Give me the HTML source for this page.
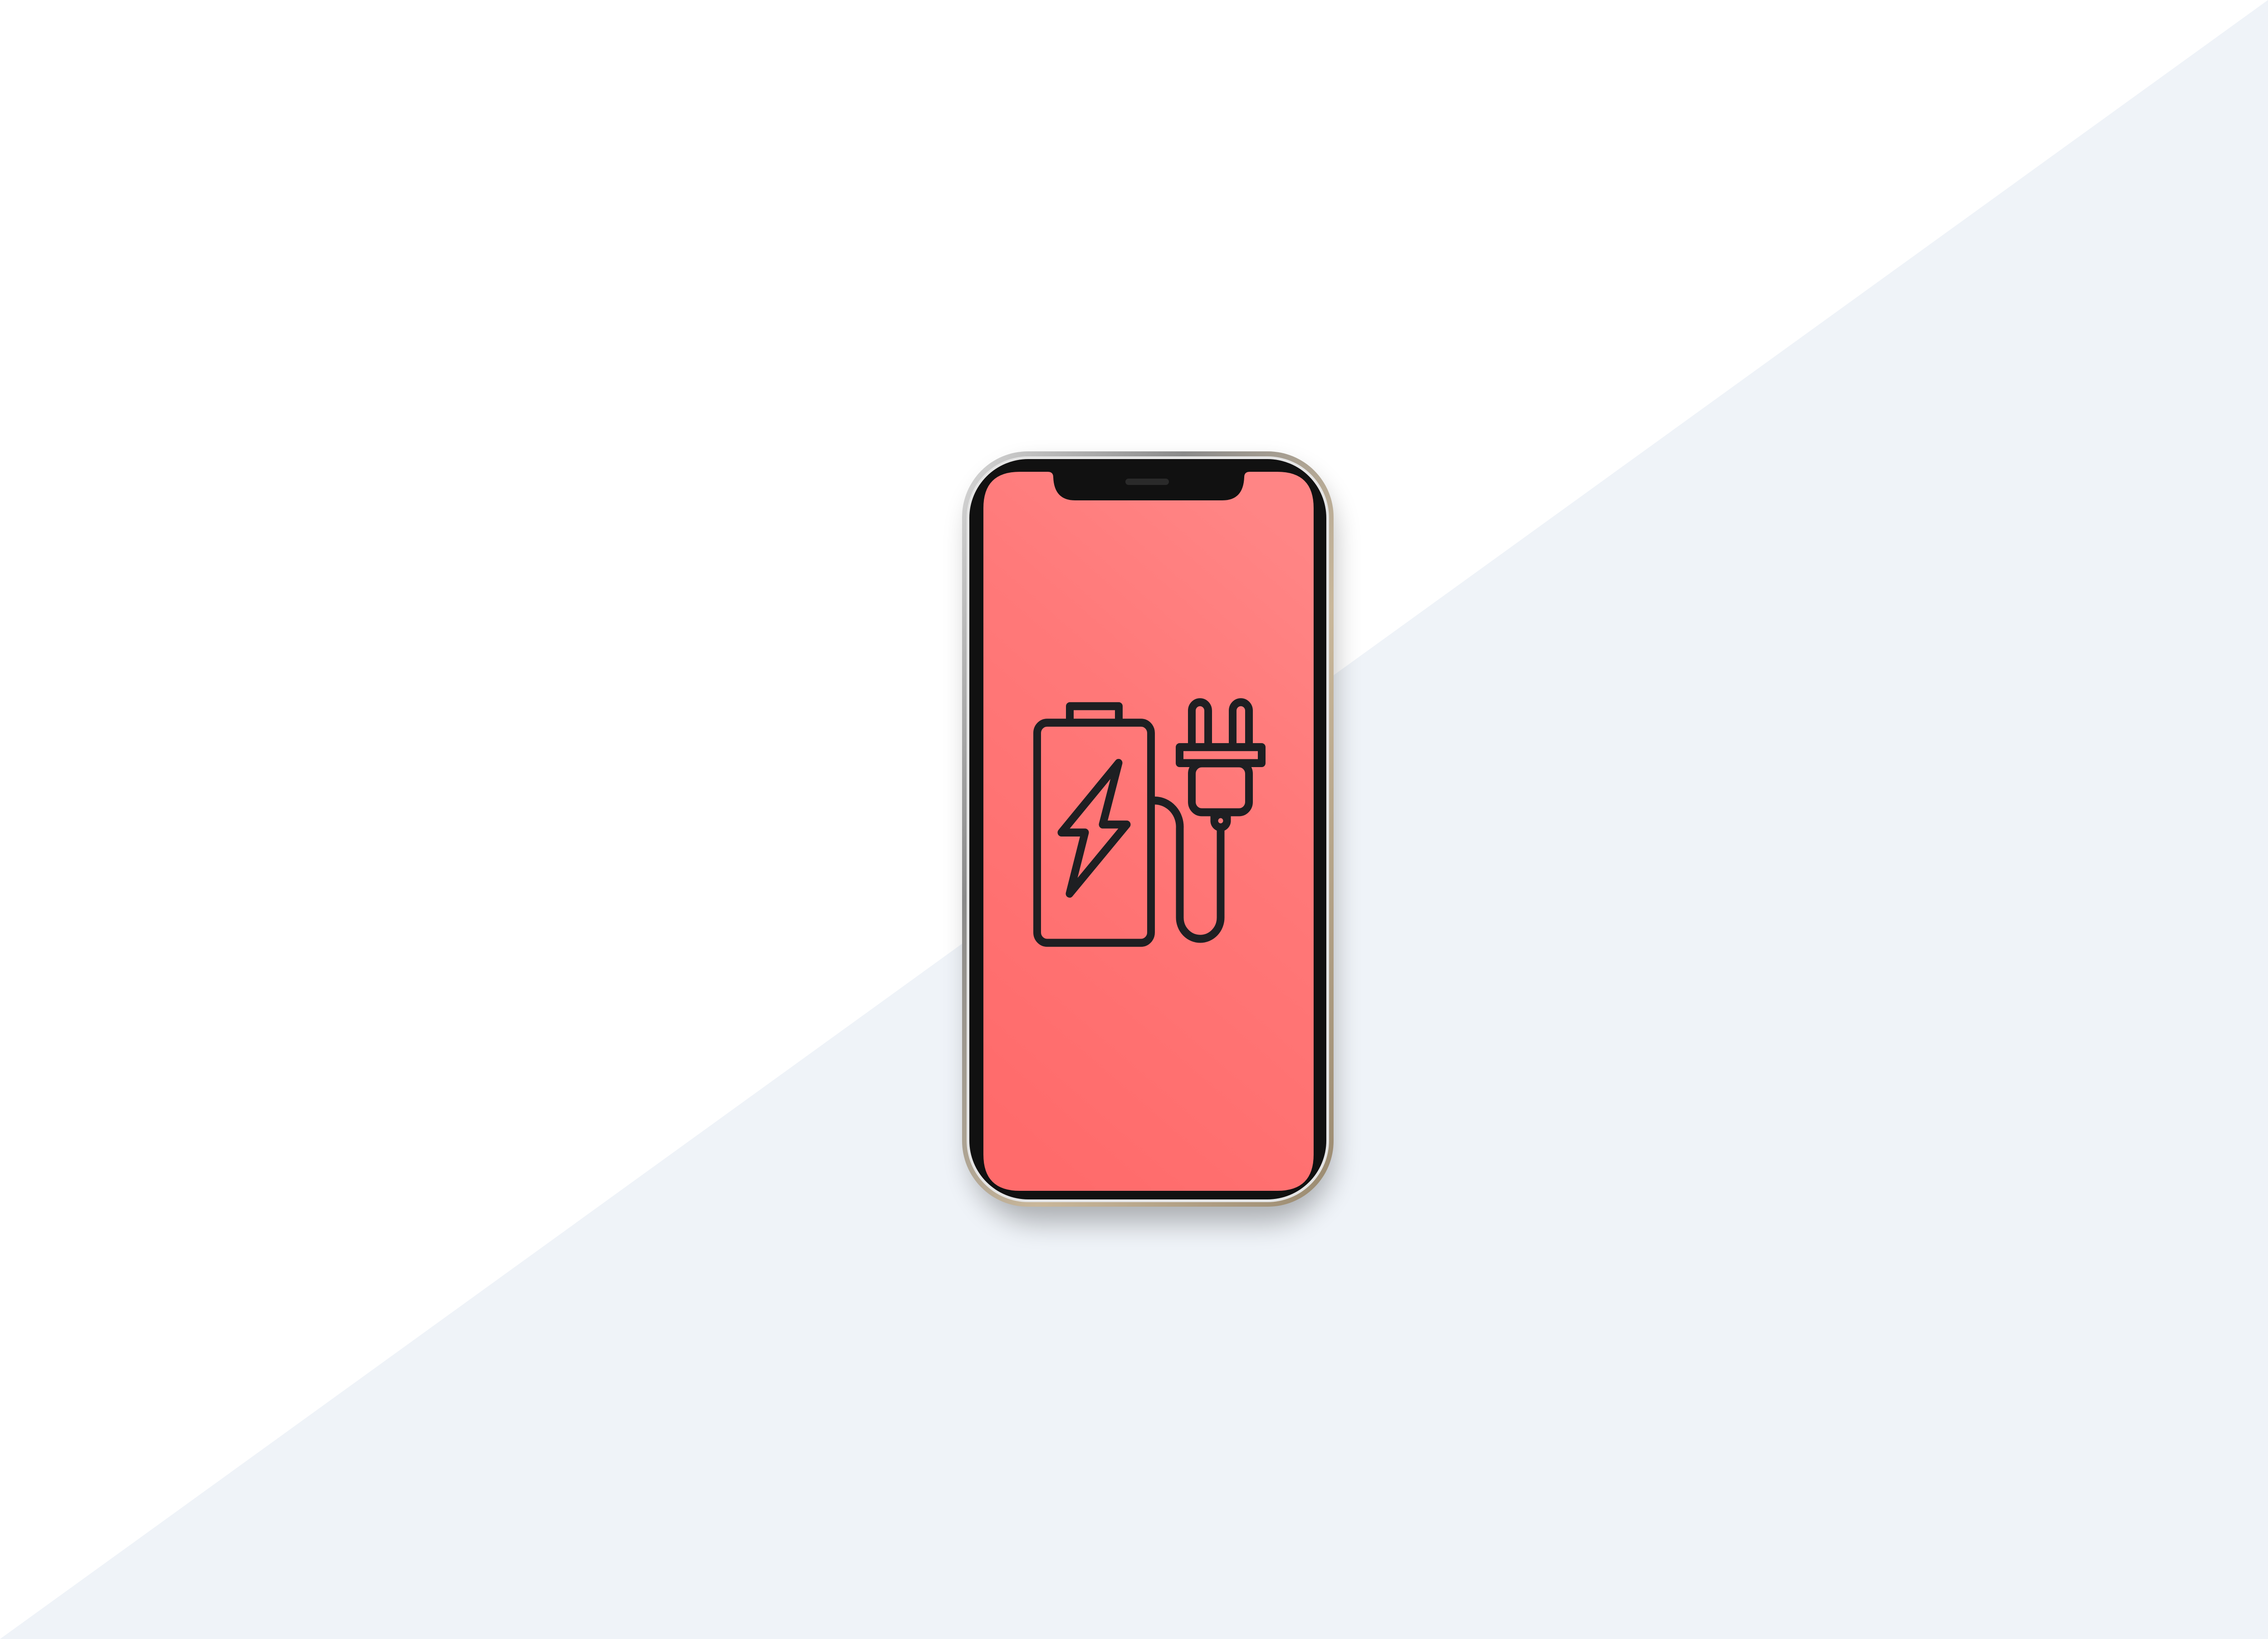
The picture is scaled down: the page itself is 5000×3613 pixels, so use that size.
<!DOCTYPE html>
<html><head><meta charset="utf-8"><style>
html,body{margin:0;padding:0;width:5000px;height:3613px;overflow:hidden;background:#fff}
svg{display:block}
</style></head><body>
<svg width="5000" height="3613" viewBox="0 0 5000 3613" xmlns="http://www.w3.org/2000/svg">
<defs>
<linearGradient id="scr" x1="0.7" y1="0" x2="0.3" y2="1">
<stop offset="0" stop-color="#ff8585"/><stop offset="0.35" stop-color="#ff7979"/><stop offset="1" stop-color="#ff6b6b"/>
</linearGradient>
<linearGradient id="rim" x1="0" y1="0" x2="1" y2="1">
<stop offset="0" stop-color="#d8d8d8"/><stop offset="0.3" stop-color="#8a8a8a"/><stop offset="0.6" stop-color="#c9b79a"/><stop offset="1" stop-color="#9a8a70"/>
</linearGradient>
<filter id="sh" x="-20%" y="-20%" width="140%" height="140%"><feGaussianBlur stdDeviation="30"/></filter>
</defs>
<polygon points="5000,0 5000,3613 0,3613" fill="#eff3f8"/>
<rect x="2140" y="1030" width="800" height="1665" rx="150" fill="#000" opacity="0.28" filter="url(#sh)"/>
<rect x="2121" y="995" width="819" height="1665" rx="145" fill="url(#rim)"/>
<rect x="2131" y="1006" width="799" height="1644" rx="136" fill="#e5e5e5"/>
<rect x="2137" y="1012" width="787" height="1632" rx="130" fill="#111"/>
<path d="M2248,1040 H2310 Q2322,1040 2322,1052 Q2324,1103 2370,1103 H2695 Q2741,1103 2743,1052 Q2743,1040 2755,1040 H2816 Q2896,1040 2896,1120 V2545 Q2896,2625 2816,2625 H2248 Q2168,2625 2168,2545 V1120 Q2168,1040 2248,1040 Z" fill="url(#scr)"/>
<rect x="2481" y="1055" width="96" height="14" rx="7" fill="#2a2a2a"/>
<g transform="translate(0,1550) scale(1,1.037) translate(0,-1550)">
<g fill="none" stroke="#1e1f22" stroke-width="17" stroke-linejoin="round" stroke-linecap="round">
<rect x="2286.5" y="1591.5" width="251" height="468" rx="22"/>
<path d="M2358.5,1591 V1556.5 H2466.5 V1591"/>
<path d="M2466,1677 L2340,1825 H2392 L2358,1955 L2484,1808 H2431 Z"/>
<path d="M2546,1757 A56,56 0 0 1 2601,1816 V2006 A45,45 0 0 0 2691,2006 V1815"/>
<circle cx="2691" cy="1800" r="14"/>
<path d="M2677,1783 V1800 M2705,1783 V1800"/>
<rect x="2627.5" y="1678" width="126" height="104" rx="22"/>
<rect x="2600.5" y="1643.5" width="181" height="34"/>
<path d="M2627.5,1643 V1566 A18,18 0 0 1 2663.5,1566 V1643"/>
<path d="M2717.5,1643 V1566 A18,18 0 0 1 2753.5,1566 V1643"/>
</g>
</g>
</svg>
</body></html>
